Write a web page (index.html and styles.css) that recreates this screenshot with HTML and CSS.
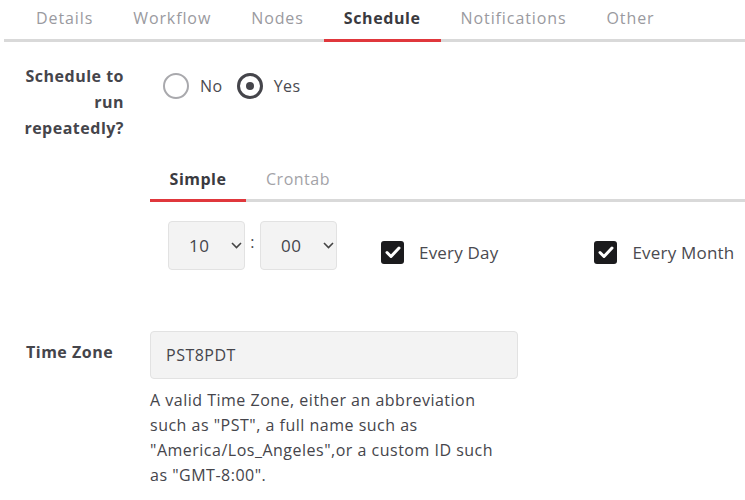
FILE: index.html
```html
<!DOCTYPE html>
<html>
<head>
<meta charset="utf-8">
<link rel="stylesheet" href="styles.css">
</head>
<body>
<nav class="tabs">
  <span class="tab">Details</span>
  <span class="tab">Workflow</span>
  <span class="tab">Nodes</span>
  <span class="tab active">Schedule</span>
  <span class="tab">Notifications</span>
  <span class="tab">Other</span>
</nav>

<div class="row row-repeat">
  <div class="label label-right">Schedule to run repeatedly?</div>
  <div class="content">
    <div class="radios">
      <span class="radio"></span><span class="radio-text">No</span>
      <span class="radio checked"></span><span class="radio-text">Yes</span>
    </div>
    <div class="subtabs">
      <span class="subtab active">Simple</span>
      <span class="subtab">Crontab</span>
    </div>
    <div class="simple">
      <div class="select"><span class="val">10</span>
        <svg class="chev" width="11" height="7" viewBox="0 0 11 7"><path d="M1 1l4.5 4.5L10 1" fill="none" stroke="#444" stroke-width="1.6"/></svg>
      </div>
      <span class="colon">:</span>
      <div class="select"><span class="val">00</span>
        <svg class="chev" width="11" height="7" viewBox="0 0 11 7"><path d="M1 1l4.5 4.5L10 1" fill="none" stroke="#444" stroke-width="1.6"/></svg>
      </div>
      <label class="check check-day"><span class="box"><svg width="16" height="13" viewBox="0 0 16 13"><path d="M2 6.5l4 4L14 2" fill="none" stroke="#fff" stroke-width="3" stroke-linecap="round" stroke-linejoin="round"/></svg></span>Every Day</label>
      <label class="check check-month"><span class="box"><svg width="16" height="13" viewBox="0 0 16 13"><path d="M2 6.5l4 4L14 2" fill="none" stroke="#fff" stroke-width="3" stroke-linecap="round" stroke-linejoin="round"/></svg></span>Every Month</label>
    </div>
  </div>
</div>

<div class="row row-tz">
  <div class="label label-left">Time Zone</div>
  <div class="content">
    <div class="input">PST8PDT</div>
    <p class="help">A valid Time Zone, either an abbreviation such as "PST", a full name such as "America/Los_Angeles",or a custom ID such as "GMT-8:00".</p>
  </div>
</div>
</body>
</html>
```

FILE: styles.css
```css
* { box-sizing: border-box; }
body {
  margin: 0;
  font-family: "Open Sans", "Lato", sans-serif;
  font-size: 16px;
  letter-spacing: 0.5px;
  color: #4a4a50;
  background: #fff;
}
.tabs {
  display: flex;
  margin-left: 4px;
  padding-left: 12px;
  height: 42px;
  border-bottom: 3px solid #d9d9d9;
}
.tab {
  padding: 7px 20px 0;
  height: 42px;
  color: #9a9aa0;
  line-height: 22px;
  letter-spacing: 0.9px;
}
.tab.active {
  color: #3a3a40;
  font-weight: 700;
  letter-spacing: 0.6px;
  border-bottom: 3px solid #e0373c;
}
.row {
  display: flex;
}
.label {
  width: 124px;
  font-weight: 700;
  color: #45454b;
  line-height: 26px;
  flex: none;
}
.label-right { text-align: right; padding-left: 10px; }
.label-left { padding-left: 26px; }
.content {
  margin-left: 26px;
  flex: 1;
}
.row-repeat { margin-top: 21px; }
.radios {
  display: flex;
  align-items: center;
  margin-top: 10px;
  margin-left: 13px;
  height: 26px;
}
.radio {
  width: 26px;
  height: 26px;
  border-radius: 50%;
  border: 2px solid #a9a9ad;
  position: relative;
}
.radio.checked { border: 3px solid #45454b; }
.radio.checked::after {
  content: "";
  position: absolute;
  left: 6px; top: 6px;
  width: 8px; height: 8px;
  border-radius: 50%;
  background: #45454b;
}
.radio-text {
  margin-left: 11px;
  margin-right: 14px;
}
.subtabs {
  display: flex;
  margin-top: 70px;
  border-bottom: 3px solid #d9d9d9;
  height: 33px;
}
.subtab {
  width: 96px;
  text-align: center;
  color: #a3a3a8;
  line-height: 20px;
  height: 33px;
}
.subtab + .subtab { width: 104px; }
.subtab.active {
  color: #3a3a40;
  font-weight: 700;
  border-bottom: 3px solid #e0373c;
}
.simple {
  display: flex;
  align-items: center;
  margin-top: 19px;
  margin-left: 18px;
  height: 49px;
}
.select {
  width: 77px;
  height: 49px;
  background: #f3f3f3;
  border: 1px solid #e2e2e2;
  border-radius: 4px;
  display: flex;
  align-items: center;
  padding-left: 20px;
  color: #45454b;
}
.select .val { width: 42px; font-size: 17px; }
.colon {
  width: 15px;
  text-align: center;
  margin-top: -8px;
}
.check {
  display: flex;
  align-items: center;
  font-size: 17px;
  letter-spacing: 0.2px;
  color: #4a4a50;
  margin-top: 13px;
}
.check-day { margin-left: 44px; }
.check-month { margin-left: 96px; }
.box {
  width: 23px;
  height: 23px;
  background: #1b1b1d;
  border-radius: 3px;
  display: flex;
  align-items: center;
  justify-content: center;
  margin-right: 15px;
}
.row-tz { margin-top: 61px; }
.row-tz .label { padding-top: 8px; }
.input {
  width: 368px;
  height: 48px;
  background: #f3f3f3;
  border: 1px solid #e2e2e2;
  border-radius: 4px;
  padding-left: 15px;
  line-height: 46px;
  color: #45454b;
}
.help {
  margin: 9px 0 0;
  width: 360px;
  line-height: 25px;
  color: #45454b;
}
```
